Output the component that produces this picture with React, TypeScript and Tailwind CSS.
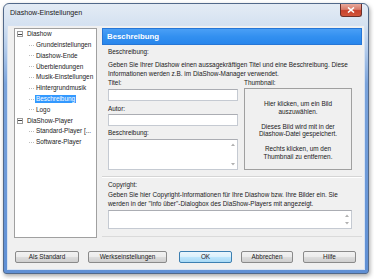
import React from "react"

const tree = [
  { label: "Diashow", root: true },
  { label: "Grundeinstellungen" },
  { label: "Diashow-Ende" },
  { label: "Überblendungen" },
  { label: "Musik-Einstellungen" },
  { label: "Hintergrundmusik" },
  { label: "Beschreibung", selected: true },
  { label: "Logo" },
  { label: "DiaShow-Player", root: true },
  { label: "Standard-Player [..." },
  { label: "Software-Player" },
]

function Minus() {
  return (
    <span className="flex h-[6px] w-[6px] items-center justify-center border border-[#9a9a9a] bg-white">
      <span className="h-px w-[4px] bg-[#444]" />
    </span>
  )
}

function ScrollArrows() {
  return (
    <div className="flex h-full w-[6px] flex-col items-center justify-between py-[3px]">
      <svg width="4" height="3" viewBox="0 0 4 3">
        <path d="M0 3 L2 0.5 L4 3 Z" fill="#b0b0b0" />
      </svg>
      <svg width="4" height="3" viewBox="0 0 4 3">
        <path d="M0 0 L2 2.5 L4 0 Z" fill="#b0b0b0" />
      </svg>
    </div>
  )
}

function Btn({ label, w, ml, def }: { label: string; w: string; ml: string; def?: boolean }) {
  return (
    <div
      className={
        def
          ? `${w} ${ml} flex h-[12px] items-center justify-center rounded-[2px] border border-[#3c7fb1] bg-[linear-gradient(180deg,#eaf6fd_0%,#d9f0fc_50%,#bee6fd_51%,#a7d9f5_100%)]`
          : `${w} ${ml} flex h-[12px] items-center justify-center rounded-[2px] border border-[#8a8a8a] bg-[linear-gradient(180deg,#f2f2f2_0%,#ebebeb_50%,#dddddd_51%,#cfcfcf_100%)]`
      }
    >
      <span className="text-[6.4px] leading-none text-[#1a1a1a]">{label}</span>
    </div>
  )
}

export default function App() {
  return (
    <div className="h-[279px] w-[374px] bg-white pl-[3px] pt-[3px] font-['Liberation_Sans',Arial,sans-serif]">
      <div className="flex h-[271px] w-[366px] flex-col rounded-t-[6px] rounded-b-[3px] border border-[#52698a] bg-[linear-gradient(180deg,#e4ecf5_0px,#d5e2f1_20px,#b3cbea_45px,#7aa3db_80px,#5f8fd4_100%)] shadow-[1px_2px_4px_rgba(0,0,0,0.35)]">
        {/* title bar */}
        <div className="flex h-[22px] items-start justify-between pl-[6px] pr-[6px]">
          <span className="mt-[6px] text-[7.1px] leading-none text-[#1a1a1a]">Diashow-Einstellungen</span>
          <div className="flex h-[13px] w-[22px] items-center justify-center rounded-b-[3px] border border-t-0 border-[#6b2f2a] bg-[linear-gradient(180deg,#e9a99b_0%,#d87a68_45%,#c7412d_55%,#d2563b_100%)]">
            <svg width="8" height="6" viewBox="0 0 8 6">
              <path d="M1 0.5 L7 5.5 M7 0.5 L1 5.5" stroke="white" strokeWidth="1.6" />
            </svg>
          </div>
        </div>

        {/* client area */}
        <div className="mx-[4px] mb-[4px] flex h-[243px] flex-col bg-[#f0f0f0] text-[#1a1a1a] outline outline-1 outline-[#d6e2f2]">
          <div className="flex pt-[2px]">
            {/* tree */}
            <div className="ml-[6px] h-[210px] w-[83px] border border-[#a0a0a0] bg-white">
              {tree.map((t) => (
                <div key={t.label} className="flex h-[10.8px] items-center">
                  {t.root ? (
                    <>
                      <span className="ml-[2px]">
                        <Minus />
                      </span>
                      <span className="ml-[4px] text-[6.4px] leading-none">{t.label}</span>
                    </>
                  ) : (
                    <>
                      <span className="ml-[14px] w-[5px] border-t border-dotted border-[#bdbdbd]" />
                      <span
                        className={
                          t.selected
                            ? "ml-[1px] whitespace-nowrap bg-[#3399ff] px-[1px] py-[1px] text-[6.4px] leading-none text-white"
                            : "ml-[2px] whitespace-nowrap text-[6.4px] leading-none"
                        }
                      >
                        {t.label}
                      </span>
                    </>
                  )}
                </div>
              ))}
            </div>

            {/* right panel */}
            <div className="ml-[5px] flex h-[209px] w-[260px] flex-col border-b border-[#dadada]">
              <div className="flex h-[17px] items-center border border-[#2676d6] bg-[linear-gradient(180deg,#4a9ff6_0%,#3390f0_50%,#2886ec_100%)] pl-[4px]">
                <span className="text-[7.8px] font-bold leading-none text-white">Beschreibung</span>
              </div>

              <div className="flex h-[132px] flex-col border-b border-[#d5d5d5] pl-[6px] pr-[10px]">
                <div className="mt-[2px] h-[9px] text-[6.4px] leading-[9px]">Beschreibung:</div>
                <div className="mt-[4px] whitespace-nowrap text-[6.4px] leading-[9px]">
                  Geben Sie Ihrer Diashow einen aussagekräftigen Titel und eine Beschreibung. Diese
                  <br />
                  Informationen werden z.B. im DiaShow-Manager verwendet.
                </div>
                <div className="flex">
                  <div className="flex w-[130px] flex-col">
                    <div className="h-[9px] text-[6.4px] leading-[9px]">Titel:</div>
                    <div className="mt-[2px] h-[12px] border border-[#c5cad2] border-t-[#abadb3] bg-white" />
                    <div className="mt-[3px] h-[9px] text-[6.4px] leading-[9px]">Autor:</div>
                    <div className="mt-[1px] h-[12px] border border-[#c5cad2] border-t-[#abadb3] bg-white" />
                    <div className="mt-[2px] h-[9px] text-[6.4px] leading-[9px]">Beschreibung:</div>
                    <div className="mt-[2px] flex h-[31px] justify-end border border-[#c5cad2] border-t-[#abadb3] bg-white pr-[1px]">
                      <ScrollArrows />
                    </div>
                  </div>
                  <div className="ml-[6px] flex w-[108px] flex-col">
                    <div className="h-[9px] text-[6.4px] leading-[9px]">Thumbnail:</div>
                    <div className="mt-[1px] flex h-[82px] flex-col items-center border border-[#a0a0a0] pt-[11px] text-center text-[6.4px] leading-[7.8px]">
                      <div>
                        Hier klicken, um ein Bild
                        <br />
                        auszuwählen.
                      </div>
                      <div className="mt-[7px]">
                        Dieses Bild wird mit in der
                        <br />
                        Diashow-Datei gespeichert.
                      </div>
                      <div className="mt-[7px]">
                        Rechts klicken, um den
                        <br />
                        Thumbnail zu entfernen.
                      </div>
                    </div>
                  </div>
                </div>
              </div>

              <div className="flex flex-col border-t border-white pl-[6px] pr-[10px]">
                <div className="mt-[2px] h-[9px] text-[6.4px] leading-[9px]">Copyright:</div>
                <div className="mt-[1px] whitespace-nowrap text-[6.4px] leading-[9px]">
                  Geben Sie hier Copyright-Informationen für Ihre Diashow bzw. Ihre Bilder ein. Sie
                  <br />
                  werden in der "Info über"-Dialogbox des DiaShow-Players mit angezeigt.
                </div>
                <div className="mt-[2px] flex h-[19px] justify-end border border-[#c5cad2] border-t-[#abadb3] bg-white pr-[1px]">
                  <ScrollArrows />
                </div>
              </div>
            </div>
          </div>

          {/* buttons */}
          <div className="mt-[13px] flex">
            <Btn label="Als Standard" w="w-[64px]" ml="ml-[7px]" />
            <Btn label="Werkseinstellungen" w="w-[79px]" ml="ml-[9px]" />
            <Btn label="OK" w="w-[53px]" ml="ml-[12px]" def />
            <Btn label="Abbrechen" w="w-[52px]" ml="ml-[9px]" />
            <Btn label="Hilfe" w="w-[53px]" ml="ml-[10px]" />
          </div>
        </div>
      </div>
    </div>
  )
}
